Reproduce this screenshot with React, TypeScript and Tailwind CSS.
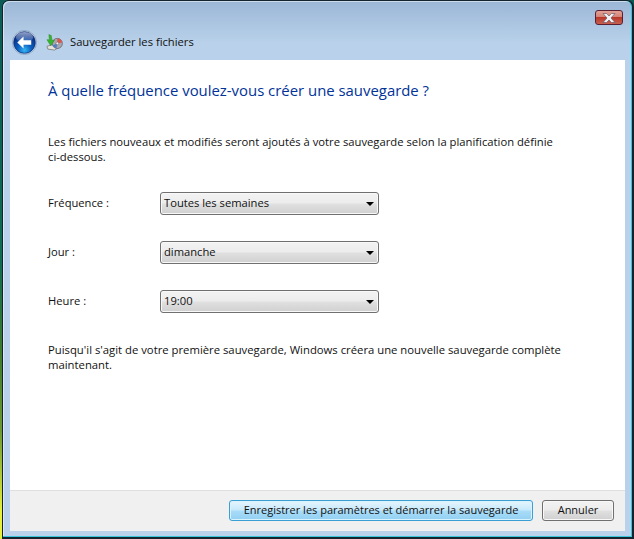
const font = "font-['Open_Sans',sans-serif]";

const BackIcon = () => (
  <svg width="25" height="25" viewBox="0 0 26 26">
    <defs>
      <radialGradient id="backFill" cx="50%" cy="85%" r="70%">
        <stop offset="0" stopColor="#35b6f2" />
        <stop offset="0.45" stopColor="#0b5fc0" />
        <stop offset="1" stopColor="#0a2f86" />
      </radialGradient>
      <linearGradient id="backShine" x1="0" y1="0" x2="0" y2="1">
        <stop offset="0" stopColor="#ffffff" stopOpacity="0.55" />
        <stop offset="1" stopColor="#ffffff" stopOpacity="0.08" />
      </linearGradient>
    </defs>
    <circle cx="13" cy="13" r="12.5" fill="#e8eef6" stroke="#5b7da8" strokeWidth="0.6" />
    <circle cx="13" cy="13" r="11.3" fill="url(#backFill)" stroke="#0a2a70" strokeWidth="0.7" />
    <ellipse cx="13" cy="7.5" rx="9" ry="5.5" fill="url(#backShine)" />
    <path d="M5.5 13 L12 6.8 L12 10.6 L20 10.6 L20 15.4 L12 15.4 L12 19.2 Z" fill="#ffffff" />
  </svg>
);

const BackupIcon = () => (
  <svg width="17" height="17" viewBox="0 0 18 18">
    <path d="M1 13 L8 11 L16 13 L9 17 L2 16 Z" fill="#e4e2da" stroke="#6a6a62" strokeWidth="0.7" />
    <circle cx="12" cy="10" r="5.4" fill="#a9a6ae" stroke="#5f5a66" strokeWidth="0.7" />
    <path d="M12 10 L12 4.8 A5.3 5.3 0 0 1 17 9 Z" fill="#d9574a" />
    <path d="M12 10 L7 12 A5.3 5.3 0 0 0 11 15.3 Z" fill="#4d7fc9" />
    <circle cx="12" cy="10" r="1.4" fill="#f4f4f4" stroke="#55505c" strokeWidth="0.5" />
    <path d="M3 0.5 L3.5 6 L1 6 L5 12.5 L9 6.5 L6.4 6.6 L5.6 1.6 Z" fill="#37b52f" stroke="#1f7a1c" strokeWidth="0.4" />
  </svg>
);

const CloseIcon = () => (
  <svg width="14" height="10" viewBox="0 0 14 10">
    <path
      d="M1 0.5 H4.6 L7 3 L9.4 0.5 H13 L9 5 L13 9.5 H9.4 L7 7 L4.6 9.5 H1 L5 5 Z"
      fill="#f1f1f4"
      stroke="#6a5a66"
      strokeWidth="0.7"
    />
  </svg>
);

const Dropdown = ({ value }: { value: string }) => (
  <div className="flex h-[23px] w-[219px] items-center justify-between rounded-[3px] border border-[#707070] bg-[linear-gradient(#f3f3f3_0%,#ececec_48%,#e0e0e0_52%,#d0d0d0_100%)] pl-[3px] pr-[4px] shadow-[inset_0_0_0_1px_#f8f8f8]">
    <span className="text-[11.2px] text-[#111]">{value}</span>
    <span className="h-0 w-0 border-x-[4px] border-t-[4px] border-x-transparent border-t-black" />
  </div>
);

const rows = [
  { label: "Fréquence :", value: "Toutes les semaines" },
  { label: "Jour :", value: "dimanche" },
  { label: "Heure :", value: "19:00" },
];

export default function App() {
  return (
    <div className={`h-[539px] w-[634px] overflow-hidden bg-[linear-gradient(#0c5c55_0%,#0e6b50_48%,#3c7a2c_65%,#6d9a30_80%,#e8f03a_95%)] pl-[2px] ${font}`}>
      <div className="h-full rounded-t-[7px] border border-r-2 border-b-2 border-[#13242e]">
        <div className="flex h-full flex-col rounded-t-[6px] border-r border-b border-r-[#37c5dc] border-b-[#37c5dc] bg-[linear-gradient(#9bb7d6_0px,#b9d1ea_42px)] pr-[6px] pb-[5px] pl-[7px] shadow-[inset_1px_1px_0_rgba(255,255,255,0.5)]">
          <div className="flex h-[27px] justify-end pt-[9px] pr-[2px]">
            <div className="flex h-[15px] w-[28px] items-center justify-center rounded-[3px] border border-[#5a2030] bg-[linear-gradient(#e3a195_0%,#d58477_45%,#b8392a_50%,#c9604f_100%)]">
              <CloseIcon />
            </div>
          </div>
          <div className="flex h-[32px] items-center pb-[3px]">
            <div className="ml-[2px] flex items-center">
              <BackIcon />
            </div>
            <div className="ml-[9px] flex items-center">
              <BackupIcon />
            </div>
            <span className="ml-[7px] text-[11.2px] text-[#111]">Sauvegarder les fichiers</span>
          </div>
          <div className="flex flex-1 flex-col bg-white">
            <div className="flex flex-1 flex-col pr-[50px] pl-[38px]">
              <h1 className="mt-[19px] text-[14.9px] leading-[22px] font-normal text-[#003399]">
                À quelle fréquence voulez-vous créer une sauvegarde ?
              </h1>
              <p className="mt-[33px] text-[11.25px] leading-[15px] text-[#111]">
                Les fichiers nouveaux et modifiés seront ajoutés à votre sauvegarde selon la planification définie
                <br />
                ci-dessous.
              </p>
              <div className="mt-[28px] flex flex-col gap-[26px]">
                {rows.map((r) => (
                  <div key={r.label} className="flex items-center">
                    <span className="w-[112px] text-[11.2px] text-[#111]">{r.label}</span>
                    <Dropdown value={r.value} />
                  </div>
                ))}
              </div>
              <p className="mt-[29px] text-[11.3px] leading-[15px] text-[#111]">
                Puisqu'il s'agit de votre première sauvegarde, Windows créera une nouvelle sauvegarde complète
                <br />
                maintenant.
              </p>
            </div>
            <div className="flex h-[41px] items-start justify-end gap-[9px] border-t border-[#dfdfdf] bg-[#f0f0f0] pt-[9px] pr-[11px]">
              <button className="h-[21px] w-[304px] rounded-[3px] border border-[#3c9fd4] bg-[linear-gradient(#e6f6fe_0%,#c6e9fb_48%,#a9dcf8_52%,#92d0f3_100%)] text-[11px] text-[#111] shadow-[inset_0_0_0_1px_#d8f2fe]">
                Enregistrer les paramètres et démarrer la sauvegarde
              </button>
              <button className="h-[21px] w-[72px] rounded-[3px] border border-[#707070] bg-[linear-gradient(#f3f3f3_0%,#ececec_48%,#e0e0e0_52%,#d0d0d0_100%)] text-[11px] text-[#111] shadow-[inset_0_0_0_1px_#f8f8f8]">
                Annuler
              </button>
            </div>
          </div>
        </div>
      </div>
    </div>
  );
}
